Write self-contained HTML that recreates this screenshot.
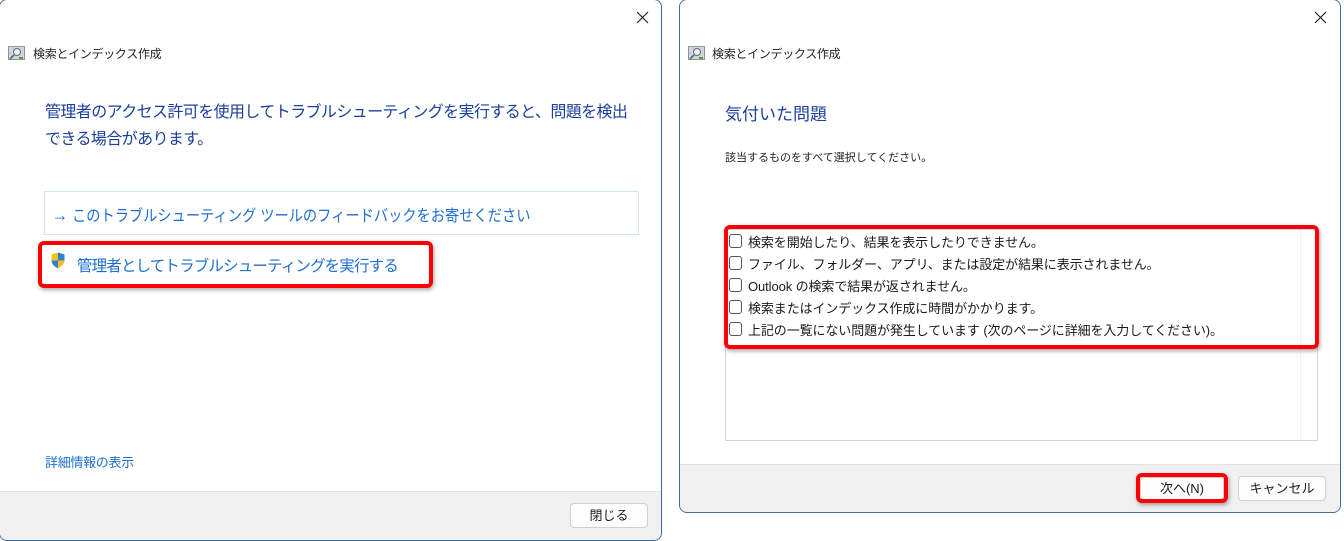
<!DOCTYPE html>
<html><head><meta charset="utf-8"><style>
*{margin:0;padding:0;box-sizing:border-box}
body{width:1344px;height:540px;background:#fff;position:relative;overflow:hidden;font-family:"Liberation Sans","Noto Sans CJK JP",sans-serif;}
.a{position:absolute;white-space:nowrap}
.win{position:absolute;background:#fff;border:1px solid #3d6d9c;border-radius:8px;overflow:hidden}
.foot{position:absolute;left:0;right:0;bottom:0;background:#f0f0f0;border-top:1px solid #e3e3e3}
.btn{position:absolute;background:#fdfdfd;border:1px solid #d0d0d0;border-radius:4px;font-size:13px;color:#1a1a1a;text-align:center}
.red{position:absolute;border:4px solid #f00;border-radius:6px;box-shadow:1px 2px 4px rgba(0,0,0,.35)}
.cb{position:absolute;width:13px;height:14px;border:1px solid #555;border-radius:3px;background:#fff}
.it{position:absolute;font-size:13px;color:#1a1a1a;white-space:nowrap;letter-spacing:-0.1px}
</style></head><body>

<!-- left window -->
<div class="win" style="left:-1px;top:-1px;width:663px;height:542px">
  <div class="foot" style="height:49px"></div>
</div>
<svg class="a" style="left:636px;top:11px" width="13" height="13" viewBox="0 0 13 13"><path d="M1 1 L12 12 M12 1 L1 12" stroke="#222" stroke-width="1.2"/></svg>
<svg class="a" style="left:8px;top:46px" width="17" height="15" viewBox="0 0 17 15"><rect x="0.5" y="0.5" width="16" height="13" fill="#cfd6dc" stroke="#8a96a2"/><circle cx="9" cy="6" r="3.5" fill="#eef" stroke="#667"/><path d="M6 9 L2 13" stroke="#556" stroke-width="1.5"/><rect x="11" y="11" width="4" height="2" fill="#5a9a3a"/></svg>
<div class="a" style="left:33px;top:45px;font-size:12px;color:#222;letter-spacing:-0.3px">検索とインデックス作成</div>
<div class="a" style="left:45px;top:99px;font-size:16px;line-height:27px;color:#1a3f9c;letter-spacing:-0.6px">管理者のアクセス許可を使用してトラブルシューティングを実行すると、問題を検出<br>できる場合があります。</div>
<div class="a" style="left:44px;top:191px;width:595px;height:44px;border:1px solid #cfe3f5"></div>
<div class="a" style="left:52px;top:202px;font-size:16px;color:#1e6fd0;transform:scaleX(0.89);transform-origin:0 0"><span style="font-size:18px">→</span> このトラブルシューティング ツールのフィードバックをお寄せください</div>
<div class="red" style="left:38px;top:241px;width:395px;height:47px"></div>
<svg class="a" style="left:51px;top:252px" width="14" height="17" viewBox="0 0 14 17"><path d="M7 0.5 L13.5 2.5 V8 C13.5 12 10.5 14.5 7 16.5 C3.5 14.5 0.5 12 0.5 8 V2.5 Z" fill="#f3c31b"/><path d="M7 0.5 L13.5 2.5 V8.5 H7 Z" fill="#2f7fd6"/><path d="M0.5 8.5 H7 V16.5 C3.5 14.5 0.5 12 0.5 8.5Z" fill="#2f7fd6"/></svg>
<div class="a" style="left:77px;top:254px;font-size:15.5px;color:#1e6fd0;letter-spacing:-0.85px">管理者としてトラブルシューティングを実行する</div>
<div class="a" style="left:45px;top:452px;font-size:13px;color:#1e6fd0;letter-spacing:-0.3px">詳細情報の表示</div>
<div class="btn" style="left:570px;top:503px;width:78px;height:25px;line-height:23px">閉じる</div>

<!-- right window -->
<div class="win" style="left:679px;top:-1px;width:662px;height:514px">
  <div class="foot" style="height:48px"></div>
</div>
<svg class="a" style="left:1314px;top:11px" width="13" height="13" viewBox="0 0 13 13"><path d="M1 1 L12 12 M12 1 L1 12" stroke="#222" stroke-width="1.2"/></svg>
<svg class="a" style="left:688px;top:46px" width="17" height="15" viewBox="0 0 17 15"><rect x="0.5" y="0.5" width="16" height="13" fill="#cfd6dc" stroke="#8a96a2"/><circle cx="9" cy="6" r="3.5" fill="#eef" stroke="#667"/><path d="M6 9 L2 13" stroke="#556" stroke-width="1.5"/><rect x="11" y="11" width="4" height="2" fill="#5a9a3a"/></svg>
<div class="a" style="left:712px;top:45px;font-size:12px;color:#222;letter-spacing:-0.3px">検索とインデックス作成</div>
<div class="a" style="left:725px;top:100px;font-size:17px;color:#1a3f9c">気付いた問題</div>
<div class="a" style="left:725px;top:149px;font-size:11px;color:#222">該当するものをすべて選択してください。</div>
<div class="a" style="left:725px;top:229px;width:593px;height:212px;border:1px solid #d4d4d4"></div>
<div class="a" style="left:1300px;top:230px;width:1px;height:210px;background:#eef3f8"></div>
<div class="red" style="left:724px;top:225px;width:595px;height:124px"></div>
<div class="cb" style="left:729px;top:234px"></div><div class="it" style="left:748px;top:232px">検索を開始したり、結果を表示したりできません。</div>
<div class="cb" style="left:729px;top:256px"></div><div class="it" style="left:748px;top:254px">ファイル、フォルダー、アプリ、または設定が結果に表示されません。</div>
<div class="cb" style="left:729px;top:278px"></div><div class="it" style="left:748px;top:276px">Outlook の検索で結果が返されません。</div>
<div class="cb" style="left:729px;top:300px"></div><div class="it" style="left:748px;top:298px">検索またはインデックス作成に時間がかかります。</div>
<div class="cb" style="left:729px;top:322px"></div><div class="it" style="left:748px;top:320px">上記の一覧にない問題が発生しています (次のページに詳細を入力してください)。</div>
<div class="btn" style="left:1140px;top:477px;width:84px;height:23px;line-height:21px">次へ(N)</div>
<div class="red" style="left:1136px;top:473px;width:92px;height:30px;box-shadow:1px 2px 4px rgba(0,0,0,.35)"></div>
<div class="btn" style="left:1238px;top:476px;width:88px;height:25px;line-height:23px">キャンセル</div>
</body></html>
